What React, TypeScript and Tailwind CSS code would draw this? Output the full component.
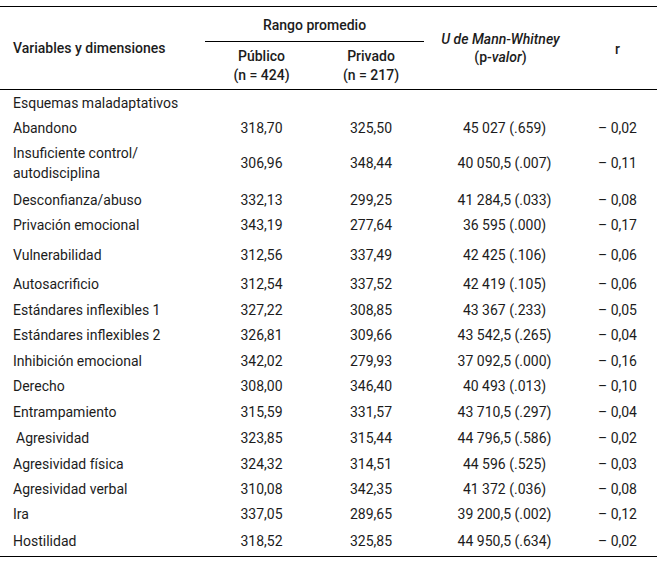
type Row = {
  label: string;
  pub: string;
  priv: string;
  u: string;
  r: string;
  h: string;
  indent?: boolean;
};

const rows: Row[] = [
  { label: "Abandono", pub: "318,70", priv: "325,50", u: "45 027 (.659)", r: "– 0,02", h: "h-[24px]" },
  { label: "Insuficiente control/\nautodisciplina", pub: "306,96", priv: "348,44", u: "40 050,5 (.007)", r: "– 0,11", h: "h-[48px]" },
  { label: "Desconfianza/abuso", pub: "332,13", priv: "299,25", u: "41 284,5 (.033)", r: "– 0,08", h: "h-[25px]" },
  { label: "Privación emocional", pub: "343,19", priv: "277,64", u: "36 595 (.000)", r: "– 0,17", h: "h-[30px]" },
  { label: "Vulnerabilidad", pub: "312,56", priv: "337,49", u: "42 425 (.106)", r: "– 0,06", h: "h-[29px]" },
  { label: "Autosacrificio", pub: "312,54", priv: "337,52", u: "42 419 (.105)", r: "– 0,06", h: "h-[26px]" },
  { label: "Estándares inflexibles 1", pub: "327,22", priv: "308,85", u: "43 367 (.233)", r: "– 0,05", h: "h-[25px]" },
  { label: "Estándares inflexibles 2", pub: "326,81", priv: "309,66", u: "43 542,5 (.265)", r: "– 0,04", h: "h-[26px]" },
  { label: "Inhibición emocional", pub: "342,02", priv: "279,93", u: "37 092,5 (.000)", r: "– 0,16", h: "h-[25px]" },
  { label: "Derecho", pub: "308,00", priv: "346,40", u: "40 493 (.013)", r: "– 0,10", h: "h-[26px]" },
  { label: "Entrampamiento", pub: "315,59", priv: "331,57", u: "43 710,5 (.297)", r: "– 0,04", h: "h-[26px]" },
  { label: "Agresividad", pub: "323,85", priv: "315,44", u: "44 796,5 (.586)", r: "– 0,02", h: "h-[26px]", indent: true },
  { label: "Agresividad física", pub: "324,32", priv: "314,51", u: "44 596 (.525)", r: "– 0,03", h: "h-[25px]" },
  { label: "Agresividad verbal", pub: "310,08", priv: "342,35", u: "41 372 (.036)", r: "– 0,08", h: "h-[25px]" },
  { label: "Ira", pub: "337,05", priv: "289,65", u: "39 200,5 (.002)", r: "– 0,12", h: "h-[27px]" },
  { label: "Hostilidad", pub: "318,52", priv: "325,85", u: "44 950,5 (.634)", r: "– 0,02", h: "h-[28px]" },
];

function DataRow({ row }: { row: Row }) {
  const twoLine = row.label.includes("\n");
  return (
    <div className={`flex ${row.h}`}>
      <div
        className={`w-[205px] pt-[4px] whitespace-pre-line ${
          twoLine ? "leading-[20px]" : "leading-[18px]"
        } ${row.indent ? "pl-[16px]" : "pl-[13px]"}`}
      >
        {row.label}
      </div>
      <div className={`w-[113px] text-center leading-[18px] ${twoLine ? "self-center" : "pt-[4px]"}`}>
        {row.pub}
      </div>
      <div className={`w-[106px] text-center leading-[18px] ${twoLine ? "self-center" : "pt-[4px]"}`}>
        {row.priv}
      </div>
      <div className={`w-[161px] text-center leading-[18px] ${twoLine ? "self-center" : "pt-[4px]"}`}>
        {row.u}
      </div>
      <div className={`w-[72px] text-right pr-[20px] leading-[18px] ${twoLine ? "self-center" : "pt-[4px]"}`}>
        {row.r}
      </div>
    </div>
  );
}

export default function App() {
  return (
    <div className="w-[662px] h-[561px] bg-white pt-[6px] font-['Roboto',sans-serif] text-[14px] text-[#1c1c1c]">
      <div className="w-[657px] border-t border-black">
        {/* header */}
        <div className="flex h-[83px] border-b border-black font-medium">
          <div className="w-[205px] flex items-center pl-[13px] pt-[1px]">
            Variables y dimensiones
          </div>
          <div className="w-[219px] flex flex-col">
            <div className="h-[35px] flex items-center justify-center pt-[3px] border-b border-black">
              Rango promedio
            </div>
            <div className="flex flex-1 items-center pt-[1px] leading-[19px]">
              <div className="w-[113px] text-center">
                Público
                <br />
                (n = 424)
              </div>
              <div className="w-[106px] text-center">
                Privado
                <br />
                (n = 217)
              </div>
            </div>
          </div>
          <div className="w-[161px] flex items-center justify-center pr-[8px] leading-[18px] text-center">
            <div>
              <span className="italic">U de Mann-Whitney</span>
              <br />
              (p-<span className="italic">valor</span>)
            </div>
          </div>
          <div className="w-[72px] flex items-center justify-center pr-[7px] pt-[3px]">r</div>
        </div>

        {/* body */}
        <div className="flex h-[25px]">
          <div className="pl-[13px] pt-[4px] leading-[18px]">Esquemas maladaptativos</div>
        </div>
        {rows.map((row) => (
          <DataRow key={row.label} row={row} />
        ))}
        <div className="border-t border-black" />
      </div>
    </div>
  );
}
